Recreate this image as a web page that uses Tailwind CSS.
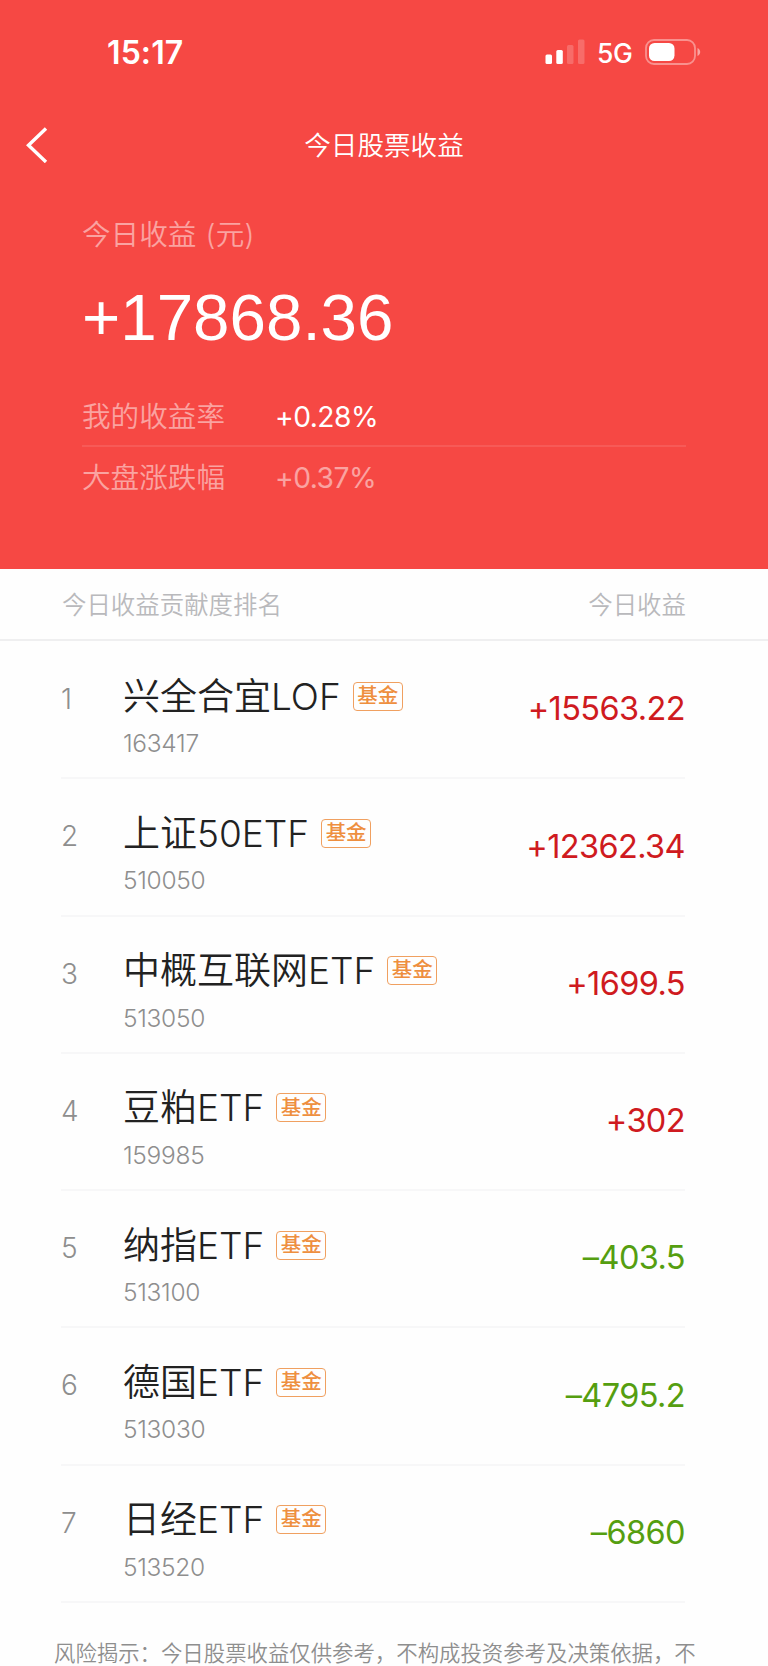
<!DOCTYPE html>
<html lang="zh-CN">

<head>
  <meta charset="UTF-8" />
  <meta name="viewport" content="width=device-width, initial-scale=1.0" />
  <title>今日股票收益</title>
  <script src="https://cdn.jsdelivr.net/npm/@tailwindcss/browser@4"></script>
</head>

<body class="bg-[#fefefe] h-[1666px] overflow-hidden font-['Inter','Noto_Sans_CJK_SC',sans-serif] font-[350]">

  <header class="bg-[#f64844] text-white h-[569px]">
    <!-- status bar -->
    <div class="h-[106px] flex items-center justify-between pl-[107px] pr-[67px]">
      <span class="text-[32px] font-semibold leading-none tracking-[0.1px]">15:17</span>
      <div class="flex items-center pb-[2px]">
        <svg class="w-10 h-[26px]" viewBox="0 0 40 26" fill="#fff">
          <rect x="0.5" y="15.5" width="6.5" height="9.5" rx="1.5" />
          <rect x="11.3" y="11" width="6.5" height="14" rx="1.5" />
          <rect x="22" y="6" width="6.5" height="19" rx="1.5" opacity=".2" />
          <rect x="33" y="0.5" width="6.5" height="24.5" rx="1.5" opacity=".2" />
        </svg>
        <span class="text-[26.5px] font-medium leading-none ml-[12px] w-[36px] tracking-[-0.5px] pt-[2px]">5G</span>
        <svg class="w-[56px] h-[26px] ml-[12px]" viewBox="0 0 56 26" fill="none">
          <rect x="1" y="1" width="49" height="24" rx="8" stroke="#fff" stroke-width="1.8" opacity=".4" />
          <rect x="4" y="4" width="25.5" height="18" rx="5.5" fill="#fff" />
          <path d="M52.5 9v8c3.6-1.4 3.6-6.6 0-8z" fill="#fff" opacity=".5" />
        </svg>
      </div>
    </div>

    <nav class="h-[78px] grid grid-cols-[100px_1fr_100px] items-center">
      <svg class="w-6 h-9 ml-[25px]" viewBox="0 0 24 36" fill="none" stroke="#fff" stroke-width="3.4">
        <path d="M21 1.5L3.5 18.2L21 35" />
      </svg>
      <h1 class="text-[26.6px] leading-none text-center pt-[1px]">今日股票收益</h1>
    </nav>

    <div class="px-[82px]">
      <p class="h-[102px] pt-[1px] flex items-center text-[28.6px] text-white/50">今日收益<span class="ml-[9px] tracking-[0.3px]">(元)</span></p>
      <p class="h-[60px] pt-[4px] flex items-center text-[65.5px] font-normal font-['Liberation_Sans',sans-serif]">+17868.36</p>
      <div class="mt-[40px] h-[61px] pt-[3px] flex items-center border-b-2 border-white/10 text-[28.6px]">
        <span class="w-[193px] text-white/50">我的收益率</span>
        <span class="text-[28.2px] font-normal tracking-[-0.5px]">+0.28%</span>
      </div>
      <div class="h-[62px] pt-[1px] flex items-center text-[28.6px] text-white/50">
        <span class="w-[193px]">大盘涨跌幅</span>
        <span class="text-[28.2px] font-normal tracking-[-0.5px]">+0.37%</span>
      </div>
    </div>
  </header>

  <div class="h-[72px] pt-[2px] flex items-center justify-between px-[62px] pr-[82px] border-b-2 border-[#efeff0] text-[24.45px] text-[#b9b9bc]">
    <span>今日收益贡献度排名</span>
    <span>今日收益</span>
  </div>

  <ul id="rank-list" class="mt-[1px] pl-[61px] pr-[83px]"></ul>

  <p class="mt-[36px] pl-[54px] text-[21.4px] leading-[28px] text-[#8e8e8e] whitespace-nowrap">风险揭示：今日股票收益仅供参考，不构成投资参考及决策依据，不</p>

  <script>
    const stocks = [
      { name: '兴全合宜LOF', code: '163417', profit: '+15563.22' },
      { name: '上证50ETF', code: '510050', profit: '+12362.34' },
      { name: '中概互联网ETF', code: '513050', profit: '+1699.5' },
      { name: '豆粕ETF', code: '159985', profit: '+302' },
      { name: '纳指ETF', code: '513100', profit: '–403.5' },
      { name: '德国ETF', code: '513030', profit: '–4795.2' },
      { name: '日经ETF', code: '513520', profit: '–6860' },
    ];

    document.getElementById('rank-list').innerHTML = stocks.map((stock, index) => `
      <li class="h-[137.25px] flex border-b-2 border-[#f7f7f8]">
        <span class="w-[62px] pt-[43px] text-[28px] leading-[28px] text-[#8e8e8e]">${index + 1}</span>
        <div class="flex-grow pt-[33px]">
          <div class="flex items-center h-[42px]">
            <span class="text-[37px] leading-none text-[#222]">${stock.name}</span>
            <span class="ml-[12px] w-[50px] h-[29px] flex items-center justify-center border border-[#f0a060] rounded-[4px] text-[20.5px] leading-none font-medium text-[#ee8f3f]">基金</span>
          </div>
          <p class="mt-[12px] text-[24.5px] leading-[28px] tracking-[-0.3px] text-[#8e8e8e]">${stock.code}</p>
        </div>
        <span class="self-center text-[32.5px] leading-none font-normal tracking-[-0.6px] ${stock.profit[0] === '+' ? 'text-[#cf1a20]' : 'text-[#559e10]'}">${stock.profit}</span>
      </li>`).join('');
  </script>
</body>

</html>
